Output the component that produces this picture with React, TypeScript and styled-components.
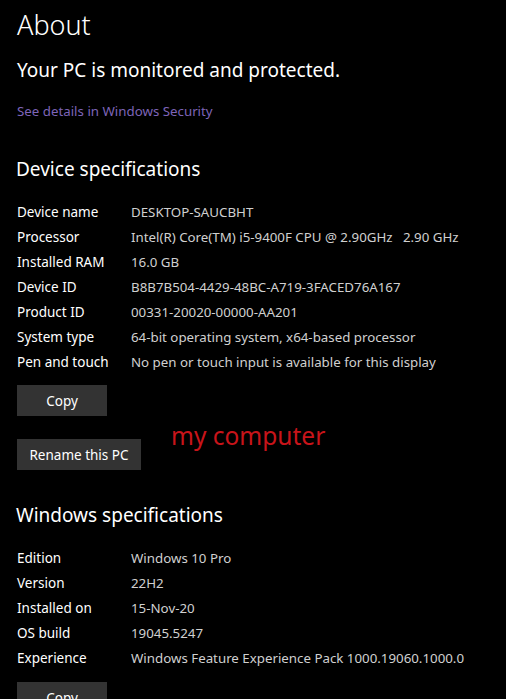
import React from "react";
import styled, { createGlobalStyle } from "styled-components";

const Global = createGlobalStyle`
  html, body { margin: 0; padding: 0; background: #000; }
  body { font-family: "Noto Sans", "Open Sans", sans-serif; color: #fff; }
`;

const Page = styled.div`
  position: relative;
  padding: 7px 0 0 17px;
  height: 699px;
  box-sizing: border-box;
  overflow: hidden;
  display: flex;
  flex-direction: column;
  align-items: flex-start;
`;

const Title = styled.h1`
  margin: 0;
  font-weight: 300;
  font-size: 27px;
  line-height: 36px;
  color: #fff;
`;

const Status = styled.div`
  margin-top: 13px;
  font-size: 19px;
  line-height: 28px;
  color: #fff;
`;

const Link = styled.a`
  margin-top: 17px;
  font-size: 13.3px;
  line-height: 20px;
  color: #7d64b8;
  text-decoration: none;
`;

const Heading = styled.h2<{ $gap: number }>`
  margin: ${(p) => p.$gap}px 0 0 -1px;
  font-weight: 400;
  font-size: 19px;
  line-height: 28px;
  color: #fff;
`;

const Specs = styled.dl<{ $gap: number }>`
  margin: ${(p) => p.$gap}px 0 0 0;
  display: grid;
  grid-template-columns: 114px auto;
  grid-auto-rows: 25px;
  align-items: center;
  font-size: 13.5px;
`;

const Label = styled.dt`
  color: #fff;
`;

const Value = styled.dd`
  margin: 0;
  color: #d0d0d0;
  font-size: 13.3px;
  white-space: pre;
`;

const Button = styled.button<{ $gap: number; $w: number }>`
  margin-top: ${(p) => p.$gap}px;
  width: ${(p) => p.$w}px;
  height: 31px;
  border: none;
  background: #333333;
  color: #fff;
  font-family: inherit;
  font-size: 13.5px;
  padding: 0;
  flex-shrink: 0;
`;

const Annotation = styled.div`
  position: absolute;
  left: 171px;
  top: 421px;
  font-size: 24.5px;
  line-height: 30px;
  color: #c8141a;
`;

const device: [string, string][] = [
  ["Device name", "DESKTOP-SAUCBHT"],
  ["Processor", "Intel(R) Core(TM) i5-9400F CPU @ 2.90GHz   2.90 GHz"],
  ["Installed RAM", "16.0 GB"],
  ["Device ID", "B8B7B504-4429-48BC-A719-3FACED76A167"],
  ["Product ID", "00331-20020-00000-AA201"],
  ["System type", "64-bit operating system, x64-based processor"],
  ["Pen and touch", "No pen or touch input is available for this display"],
];

const windows: [string, string][] = [
  ["Edition", "Windows 10 Pro"],
  ["Version", "22H2"],
  ["Installed on", "15-Nov-20"],
  ["OS build", "19045.5247"],
  ["Experience", "Windows Feature Experience Pack 1000.19060.1000.0"],
];

const SpecList = ({ rows, gap }: { rows: [string, string][]; gap: number }) => (
  <Specs $gap={gap}>
    {rows.map(([k, v]) => (
      <React.Fragment key={k}>
        <Label>{k}</Label>
        <Value>{v}</Value>
      </React.Fragment>
    ))}
  </Specs>
);

export default function App() {
  return (
    <>
      <Global />
      <Page>
        <Title>About</Title>
        <Status>Your PC is monitored and protected.</Status>
        <Link href="#">See details in Windows Security</Link>
        <Heading $gap={34}>Device specifications</Heading>
        <SpecList rows={device} gap={16} />
        <Button $gap={11} $w={90}>Copy</Button>
        <Button $gap={23} $w={124}>Rename this PC</Button>
        <Heading $gap={31}>Windows specifications</Heading>
        <SpecList rows={windows} gap={16} />
        <Button $gap={12} $w={90}>Copy</Button>
        <Annotation>my computer</Annotation>
      </Page>
    </>
  );
}
